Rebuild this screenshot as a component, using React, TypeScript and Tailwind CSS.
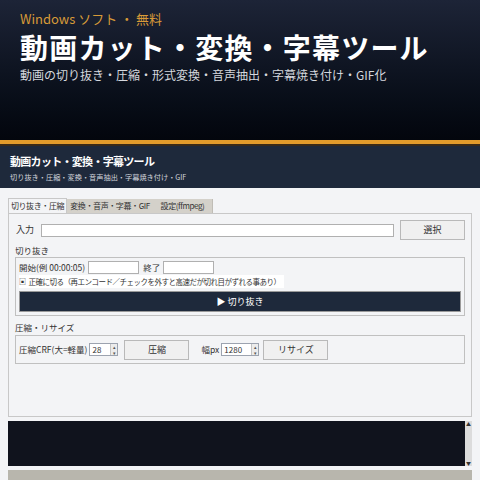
const jp = { fontFamily: '"Noto Sans CJK JP", "Noto Sans", sans-serif' };

const Spin = ({ value, w }: { value: string; w: string }) => (
  <div className={`flex h-[13px] ${w} items-stretch border border-[#9ca3af] bg-white`}>
    <div className="flex-1 pl-[2px] text-[8px] leading-[11px] text-[#333]">{value}</div>
    <div className="flex w-[7px] flex-col border-l border-[#c4c4c4] bg-[#ececec] text-[5px] leading-[5px] text-[#555]">
      <span className="flex-1 text-center">▴</span>
      <span className="flex-1 text-center">▾</span>
    </div>
  </div>
);

const Btn = ({ label, w }: { label: string; w: string }) => (
  <div className={`flex h-[20px] ${w} items-center justify-center border border-[#b9b9b9] bg-[#f0f0f0] text-[9px] text-[#333]`}>
    {label}
  </div>
);

export default function App() {
  return (
    <div className="h-[480px] w-[480px] overflow-hidden bg-[#f3f4f6]" style={jp}>
      <div className="h-[140px] bg-gradient-to-b from-[#1d2437] to-[#03060d] pl-[20px] pt-[10px]">
        <div className="text-[13px] leading-[18px] text-[#d79a38]">Windows ソフト ・ 無料</div>
        <div className="mt-[1px] text-[28px] font-semibold leading-[36px] tracking-[1.2px] text-white">
          動画カット・変換・字幕ツール
        </div>
        <div className="mt-[2px] text-[12px] leading-[16px] text-[#d5d8de]">
          動画の切り抜き・圧縮・形式変換・音声抽出・字幕焼き付け・GIF化
        </div>
      </div>
      <div className="h-[4px] bg-[#e39b2b]" />
      <div className="h-[2px] bg-[#3a2a18]" />
      <div className="h-[42px] bg-[#1e293b] pl-[10px] pt-[7px]">
        <div className="text-[11px] font-bold leading-[16px] tracking-[-0.7px] text-white">動画カット・変換・字幕ツール</div>
        <div className="mt-[2px] text-[7.2px] leading-[12px] text-[#d1d5db]">
          切り抜き・圧縮・変換・音声抽出・字幕焼き付け・GIF
        </div>
      </div>

      <div className="px-[8px] pt-[10px]">
        <div className="flex h-[15px] items-end whitespace-nowrap text-[8px] tracking-[-0.4px] text-[#333]">
          <div className="flex h-[15px] w-[59px] items-center justify-center border-x border-t border-[#c8c8c8] bg-[#f3f4f6]">切り抜き・圧縮</div>
          <div className="flex h-[14px] w-[86px] items-center justify-center bg-[#d4d1ca]">変換・音声・字幕・GIF</div>
          <div className="flex h-[14px] w-[60px] items-center justify-center border-r border-[#c0bdb6] bg-[#d4d1ca]">設定(ffmpeg)</div>
        </div>
        <div className="h-[204px] border border-[#c8c8c8] px-[6px] pt-[6px]">
          <div className="flex items-center gap-[6px]">
            <span className="w-[20px] whitespace-nowrap pl-[1px] text-[9px] text-[#333]">入力</span>
            <div className="h-[13px] flex-1 border border-[#b0b0b0] bg-white" />
            <Btn label="選択" w="w-[65px]" />
          </div>
          <div className="mt-[3px] text-[8.5px] leading-[14px] text-[#333]">切り抜き</div>
          <div className="border border-[#c0c0c0] px-[3px] pt-[3px] pb-[3px]">
            <div className="flex items-center gap-[3px] whitespace-nowrap text-[8.5px] text-[#333]">
              <span>開始(例 00:00:05)</span>
              <div className="h-[13px] w-[51px] border border-[#b0b0b0] bg-white" />
              <span className="ml-[1px]">終了</span>
              <div className="h-[13px] w-[51px] border border-[#b0b0b0] bg-white" />
            </div>
            <div className="mt-[1px] flex w-fit items-center gap-[3px] whitespace-nowrap bg-white pr-[3px] text-[7.5px] leading-[13px] tracking-[-0.5px] text-[#333]">
              <span className="text-[7px]">▣</span>
              <span>正確に切る（再エンコード／チェックを外すと高速だが切れ目がずれる事あり）</span>
            </div>
            <div className="mt-[3px] flex h-[21px] items-center justify-center border border-[#9a9a9a] bg-[#1e293b] text-[9px] text-white">
              ▶ 切り抜き
            </div>
          </div>
          <div className="mt-[4px] text-[8.5px] leading-[14px] text-[#333]">圧縮・リサイズ</div>
          <div className="mt-[1px] flex h-[29px] items-center whitespace-nowrap border border-[#c0c0c0] px-[3px] text-[8.5px] text-[#333]">
            <span>圧縮CRF(大=軽量)</span>
            <div className="ml-[2px]"><Spin value="28" w="w-[29px]" /></div>
            <div className="ml-[6px]"><Btn label="圧縮" w="w-[65px]" /></div>
            <span className="ml-[12px]">幅px</span>
            <div className="ml-[2px]"><Spin value="1280" w="w-[38px]" /></div>
            <div className="ml-[4px]"><Btn label="リサイズ" w="w-[65px]" /></div>
          </div>
        </div>

        <div className="mt-[4px] flex h-[45px] bg-[#10131d]">
          <div className="flex-1" />
          <div className="flex w-[7px] flex-col justify-between bg-[#dcdcdc] text-[5px] leading-[6px] text-[#333]">
            <span className="text-center">▲</span>
            <span className="text-center">▼</span>
          </div>
        </div>
        <div className="mt-[4px] h-[10px] bg-[#b8b6ad]" />
      </div>
    </div>
  );
}
